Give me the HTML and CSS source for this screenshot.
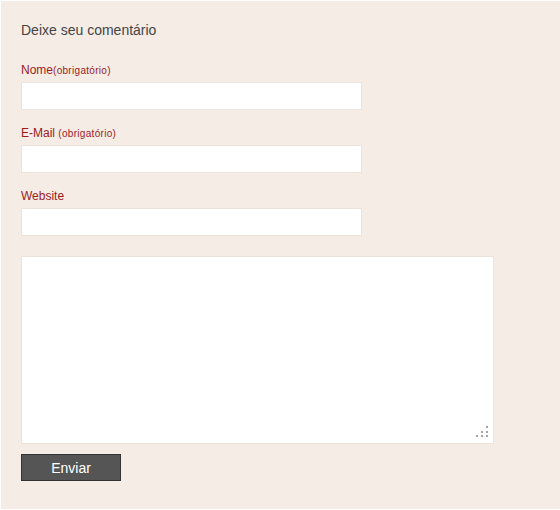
FILE: index.html
```html
<!DOCTYPE html>
<html lang="pt">
<head>
<meta charset="utf-8">
<title>Deixe seu comentário</title>
<link rel="stylesheet" href="styles.css">
</head>
<body>
<div class="box">
  <h3 class="title">Deixe seu comentário</h3>
  <form class="form">
    <div class="field">
      <label class="label">Nome<small class="req">(obrigatório)</small></label>
      <input class="input" type="text">
    </div>
    <div class="field">
      <label class="label">E-Mail <small class="req">(obrigatório)</small></label>
      <input class="input" type="text">
    </div>
    <div class="field">
      <label class="label">Website</label>
      <input class="input" type="text">
    </div>
    <div class="area-wrap">
      <textarea class="area"></textarea>
      <svg class="grip" width="12" height="11" viewBox="0 0 12 11">
        <rect x="10" y="0" width="2" height="2" fill="#a6a6a6"/>
        <rect x="5" y="5" width="2" height="2" fill="#a6a6a6"/>
        <rect x="10" y="5" width="2" height="2" fill="#a6a6a6"/>
        <rect x="0" y="9" width="2" height="2" fill="#a6a6a6"/>
        <rect x="5" y="9" width="2" height="2" fill="#a6a6a6"/>
        <rect x="10" y="9" width="2" height="2" fill="#a6a6a6"/>
      </svg>
    </div>
    <button class="btn" type="button">Enviar</button>
  </form>
</div>
</body>
</html>
```

FILE: styles.css
```css
html, body {
  margin: 0;
  padding: 0;
  background: #ffffff;
}
body {
  font-family: "Liberation Sans", Arial, sans-serif;
}
.box {
  width: 559px;
  height: 508px;
  box-sizing: border-box;
  background: #f5ece6;
  margin-left: 1px;
  margin-top: 1px;
  padding: 20px 20px 0 20px;
}
.title {
  margin: 0;
  font-weight: normal;
  font-size: 14px;
  line-height: 18px;
  color: #444444;
}
.form {
  display: flex;
  flex-direction: column;
  align-items: flex-start;
  margin-top: 24px;
}
.field {
  display: flex;
  flex-direction: column;
  margin-bottom: 16px;
}
.label {
  display: block;
  height: 14px;
  font-size: 12px;
  line-height: 14px;
  color: #9b1b1b;
  margin-bottom: 5px;
}
.req {
  font-size: 10px;
  line-height: 10px;
  letter-spacing: 0.3px;
}
.input {
  width: 341px;
  height: 28px;
  box-sizing: border-box;
  border: 1px solid #ebe3dc;
  background: #ffffff;
  margin: 0;
  padding: 2px 4px;
  outline: none;
}
.area-wrap {
  position: relative;
  width: 473px;
  height: 188px;
  margin-top: 4px;
}
.area {
  display: block;
  width: 473px;
  height: 188px;
  box-sizing: border-box;
  border: 1px solid #ebe3dc;
  background: #ffffff;
  margin: 0;
  resize: none;
  outline: none;
}
.grip {
  position: absolute;
  right: 6px;
  bottom: 7px;
}
.btn {
  margin-top: 10px;
  width: 100px;
  height: 27px;
  box-sizing: border-box;
  background: #555555;
  border: 1px solid #333333;
  color: #ffffff;
  font-family: "Liberation Sans", Arial, sans-serif;
  font-size: 14px;
  padding: 0;
}
```
